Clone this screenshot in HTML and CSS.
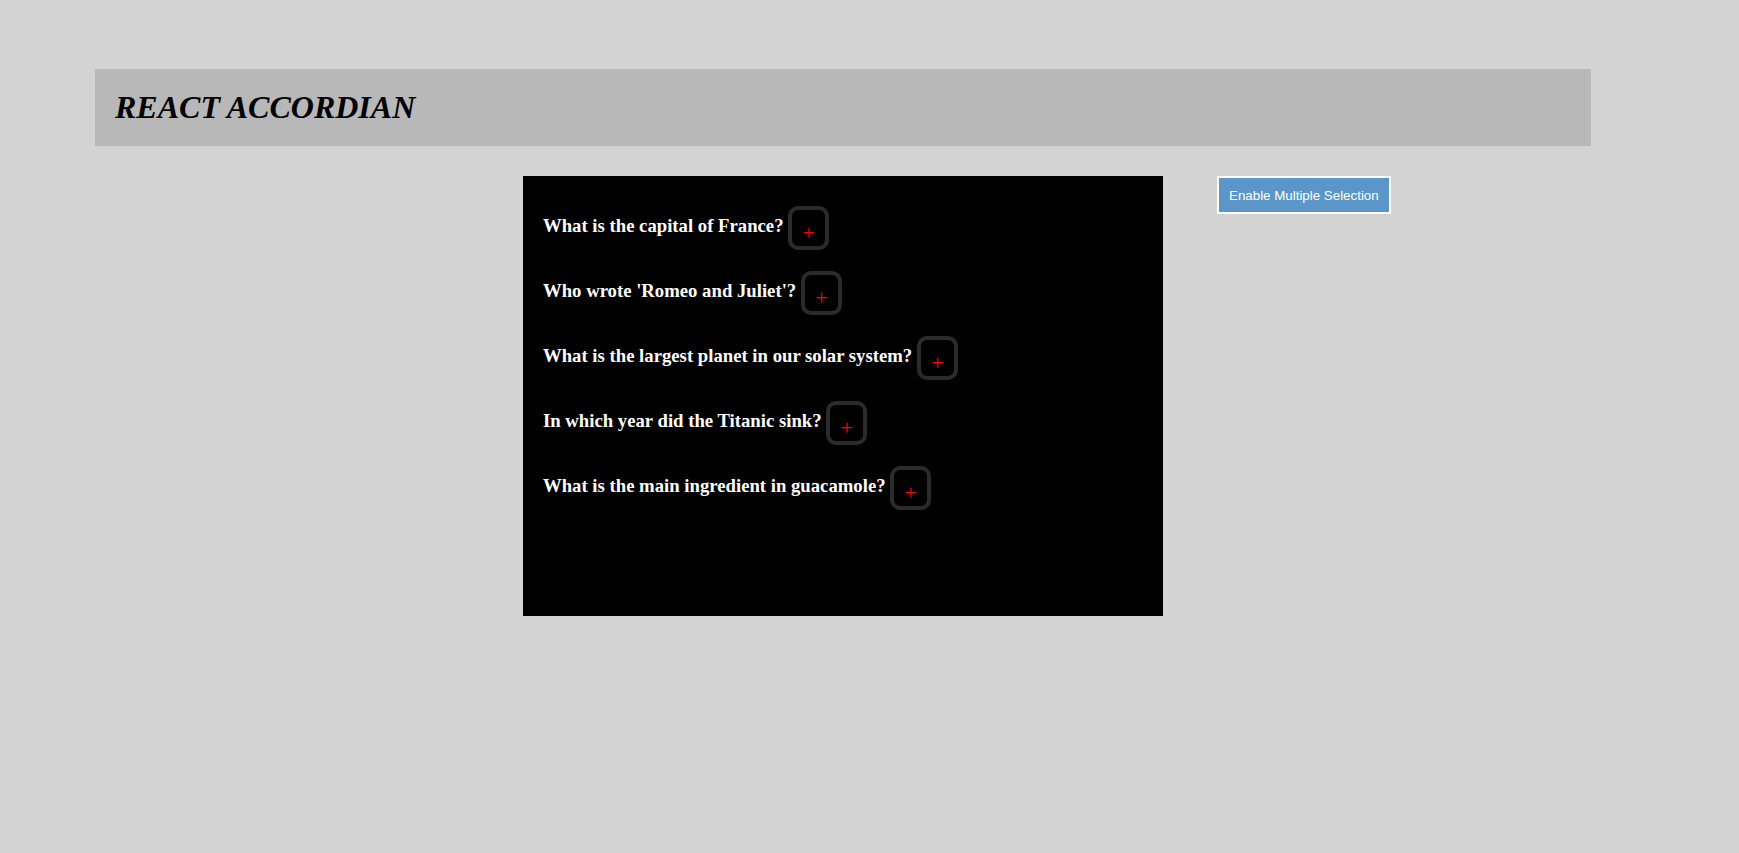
FILE: index.html
```html
<!DOCTYPE html>
<html lang="en">
<head>
    <meta charset="UTF-8">
    <meta name="viewport" content="width=device-width, initial-scale=1.0">
    <title>React Accordian</title>
    <link rel="stylesheet" href="styles.css">
</head>
<body>

<div class="app">
    <div class="header">
        <h1>REACT ACCORDIAN</h1>
    </div>

    <div class="main">
        <div class="accordian" id="accordian">
            <div class="item">
                <h3 class="question">What is the capital of France? <button class="toggle"><span>+</span></button></h3>
                <div class="answer">Paris</div>
            </div>
            <div class="item">
                <h3 class="question">Who wrote 'Romeo and Juliet'? <button class="toggle"><span>+</span></button></h3>
                <div class="answer">William Shakespeare</div>
            </div>
            <div class="item">
                <h3 class="question">What is the largest planet in our solar system? <button class="toggle"><span>+</span></button></h3>
                <div class="answer">Jupiter</div>
            </div>
            <div class="item">
                <h3 class="question">In which year did the Titanic sink? <button class="toggle"><span>+</span></button></h3>
                <div class="answer">1912</div>
            </div>
            <div class="item">
                <h3 class="question">What is the main ingredient in guacamole? <button class="toggle"><span>+</span></button></h3>
                <div class="answer">Avocado</div>
            </div>
        </div>

        <div class="side">
            <button class="multi-btn" id="multiBtn">Enable Multiple Selection</button>
        </div>
    </div>
</div>

<script>
    let multiple = false;
    const items = document.querySelectorAll(".item");

    items.forEach(item => {
        item.querySelector(".toggle").addEventListener("click", () => {
            const open = item.classList.contains("open");
            if (!multiple) {
                items.forEach(i => i.classList.remove("open"));
            }
            item.classList.toggle("open", !open);
        });
    });

    document.getElementById("multiBtn").addEventListener("click", e => {
        multiple = !multiple;
        e.target.innerText = multiple ? "Disable Multiple Selection" : "Enable Multiple Selection";
    });
</script>

</body>
</html>
```

FILE: styles.css
```css
body {
    margin: 0;
    background-color: #d3d3d3;
    font-family: "Liberation Serif", "Times New Roman", serif;
}

.app {
    width: 1496px;
    margin: 69px 0 0 95px;
}

.header {
    background-color: #b8b8b8;
    padding: 20px;
}

.header h1 {
    margin: 0;
    font-size: 32px;
    font-style: italic;
    font-weight: bold;
    color: #000;
}

.main {
    display: grid;
    grid-template-columns: 1fr 640px 1fr;
    align-items: start;
    margin-top: 30px;
}

.accordian {
    grid-column: 2;
    height: 440px;
    box-sizing: border-box;
    background-color: #000;
    padding: 30px 20px;
    display: flex;
    flex-direction: column;
    gap: 21px;
}

.question {
    margin: 0;
    font-size: 18.72px;
    font-weight: bold;
    color: #fff;
}

.toggle {
    width: 41px;
    height: 44px;
    box-sizing: border-box;
    padding: 9px 0 0;
    border: 4px solid #2b2b2b;
    border-radius: 10px;
    background-color: #000;
    color: red;
    font-family: "Liberation Serif", "Times New Roman", serif;
    font-size: 22px;
    line-height: 1;
    vertical-align: middle;
    cursor: pointer;
}

.answer {
    display: none;
    color: #fff;
    font-size: 16px;
    padding-top: 8px;
}

.item.open .answer {
    display: block;
}

.side {
    grid-column: 3;
}

.multi-btn {
    margin-left: 54px;
    padding: 10px 10px 9px;
    border: 2px solid #fff;
    border-radius: 0;
    background-color: #5a96c8;
    color: #fff;
    font-family: "Liberation Sans", Arial, sans-serif;
    font-size: 13.33px;
    cursor: pointer;
}

.multi-btn:hover {
    background-color: #4a86b8;
}
```
